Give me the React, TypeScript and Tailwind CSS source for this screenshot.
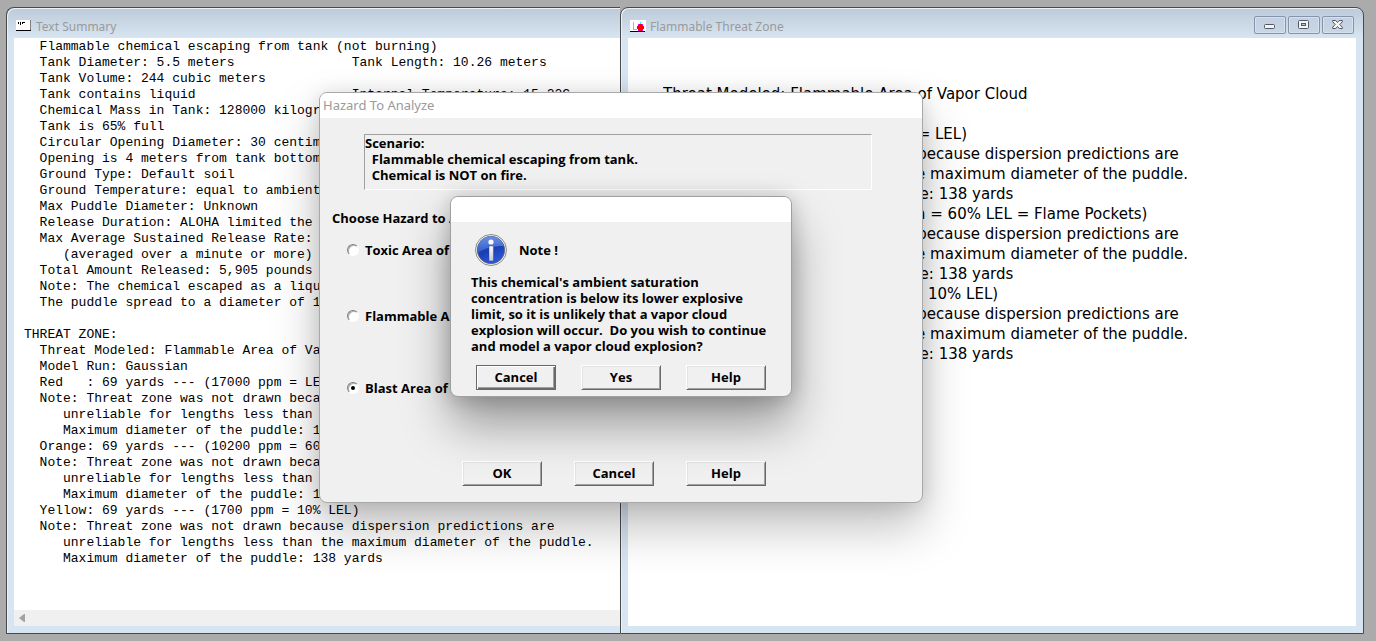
import { useState } from 'react'

const SUMMARY = `  Flammable chemical escaping from tank (not burning)
  Tank Diameter: 5.5 meters               Tank Length: 10.26 meters
  Tank Volume: 244 cubic meters
  Tank contains liquid                    Internal Temperature: 15.22C
  Chemical Mass in Tank: 128000 kilograms
  Tank is 65% full
  Circular Opening Diameter: 30 centimeters
  Opening is 4 meters from tank bottom
  Ground Type: Default soil
  Ground Temperature: equal to ambient
  Max Puddle Diameter: Unknown
  Release Duration: ALOHA limited the duration to 1 hour
  Max Average Sustained Release Rate: 107 pounds/min
     (averaged over a minute or more)
  Total Amount Released: 5,905 pounds
  Note: The chemical escaped as a liquid and formed an evaporating puddle.
  The puddle spread to a diameter of 138 yards.

THREAT ZONE:
  Threat Modeled: Flammable Area of Vapor Cloud
  Model Run: Gaussian
  Red   : 69 yards --- (17000 ppm = LEL)
  Note: Threat zone was not drawn because dispersion predictions are
     unreliable for lengths less than the maximum diameter of the puddle.
     Maximum diameter of the puddle: 138 yards
  Orange: 69 yards --- (10200 ppm = 60% LEL = Flame Pockets)
  Note: Threat zone was not drawn because dispersion predictions are
     unreliable for lengths less than the maximum diameter of the puddle.
     Maximum diameter of the puddle: 138 yards
  Yellow: 69 yards --- (1700 ppm = 10% LEL)
  Note: Threat zone was not drawn because dispersion predictions are
     unreliable for lengths less than the maximum diameter of the puddle.
     Maximum diameter of the puddle: 138 yards`

const THREAT = `Threat Modeled: Flammable Area of Vapor Cloud
Model Run: Gaussian
Red      : 69 yards --- (17000 ppm = LEL)
Note: Threat zone was not drawn because dispersion predictions are
unreliable for lengths less than the maximum diameter of the puddle.
   Maximum diameter of the puddle: 138 yards
Orange:    69 yards --- (10200 ppm = 60% LEL = Flame Pockets)
Note: Threat zone was not drawn because dispersion predictions are
unreliable for lengths less than the maximum diameter of the puddle.
   Maximum diameter of the puddle: 138 yards
Yellow:    69 yards --- (1700 ppm = 10% LEL)
Note: Threat zone was not drawn because dispersion predictions are
unreliable for lengths less than the maximum diameter of the puddle.
   Maximum diameter of the puddle: 138 yards`

const NOTE = `This chemical's ambient saturation
concentration is below its lower explosive
limit, so it is unlikely that a vapor cloud
explosion will occur.  Do you wish to continue
and model a vapor cloud explosion?`

const HAZARDS = [
  { id: 'toxic', label: 'Toxic Area of Vapor Cloud', gap: 'h-[66px]' },
  { id: 'flammable', label: 'Flammable Area of Vapor Cloud', gap: 'h-[72px]' },
  { id: 'blast', label: 'Blast Area of Vapor Cloud Explosion', gap: 'h-4' },
]

function TextIcon() {
  return (
    <svg width="16" height="12" viewBox="0 0 16 12" shapeRendering="crispEdges">
      <path fill="#fff" d="M0 0h14v10H0z" />
      <path fill="#808080" d="M14 0h1v11h-1z" />
      <path fill="#000" d="M0 10h15v1H0zM2 2h1v2H2zM4 2h1v3H4zM6 2h3v1H6zM6 3h1v1H6z" />
    </svg>
  )
}

function ZoneIcon() {
  return (
    <svg width="16" height="12" viewBox="0 0 16 12" shapeRendering="crispEdges">
      <path fill="#fff" d="M0 0h16v11H0z" />
      <path fill="#0ff" d="M3 2h1v8H3zM4 9h3v1H4zM10 2h1v2h-1z" />
      <path fill="#f0f" d="M8 4h5v7H8z" />
      <path fill="#f00" d="M9 4h3v1h1v1h1v3h-1v1h-1v1H9v-1H8V9H7V6h1V5h1z" />
      <path fill="#000" d="M0 11h15v1H0z" />
    </svg>
  )
}

function InfoIcon() {
  return (
    <svg width="32" height="32" viewBox="0 0 32 32">
      <defs>
        <linearGradient id="ball" x1="0" y1="0" x2="0.4" y2="1">
          <stop offset="0" stopColor="#1c47b4" />
          <stop offset="0.6" stopColor="#1a3fb4" />
          <stop offset="1" stopColor="#2a55d8" />
        </linearGradient>
        <linearGradient id="gloss" x1="0" y1="0" x2="0" y2="1">
          <stop offset="0" stopColor="#6a8fe6" />
          <stop offset="1" stopColor="#2f5cc8" />
        </linearGradient>
        <linearGradient id="stem" x1="0" y1="0" x2="0" y2="1">
          <stop offset="0" stopColor="#fff" />
          <stop offset="1" stopColor="#c9c9c9" />
        </linearGradient>
      </defs>
      <circle cx="16" cy="16" r="15.5" fill="#f4f4f4" stroke="#8a8a8a" />
      <circle cx="16" cy="16" r="13.7" fill="url(#ball)" stroke="#5b6275" strokeWidth="0.8" />
      <path fill="url(#gloss)" d="M3 19A13.2 13.2 0 0 1 28.6 12C21 12 10 13 3 19z" />
      <circle cx="16" cy="8" r="2.6" fill="#fff" />
      <rect x="14" y="12" width="4.4" height="15" rx="1" fill="url(#stem)" stroke="#27439b" strokeWidth="0.4" />
    </svg>
  )
}

function MinimizeIcon() {
  return (
    <svg width="12" height="10" viewBox="0 0 12 10">
      <rect x="0.5" y="4.5" width="10" height="4" rx="1" fill="#f4f4f0" stroke="#535666" />
    </svg>
  )
}

function MaximizeIcon() {
  return (
    <svg width="12" height="10" viewBox="0 0 12 10">
      <rect x="0.5" y="0.5" width="10" height="8" rx="1" fill="#f4f4f0" stroke="#535666" />
      <rect x="3.5" y="3.5" width="4" height="2" fill="#b9cbe4" stroke="#535666" />
    </svg>
  )
}

function CloseIcon() {
  return (
    <svg width="12" height="10" viewBox="0 0 12 10">
      <path
        fill="#f4f4f0"
        stroke="#535666"
        strokeLinejoin="round"
        d="M.7.5h3l1.8 2 1.8-2h3v1.3L7.8 4.5l2.5 2.7v1.3h-3l-1.8-2-1.8 2h-3V7.2l2.5-2.7L.7 1.8z"
      />
    </svg>
  )
}

const captionButton =
  'flex h-[18px] w-8 items-center justify-center rounded-xs border border-[#8593ad] bg-linear-to-b from-[#c3d0df] to-[#c9d6e6] shadow-[inset_0_0_0_1px_#d6e1ee]'

type ChildWindowProps = {
  title: string
  icon: React.ReactNode
  controls?: React.ReactNode
  className: string
  children: React.ReactNode
}

function ChildWindow({ title, icon, controls, className, children }: ChildWindowProps) {
  return (
    <section
      className={
        'flex min-w-0 flex-col rounded-t-lg border border-[#4a4a4a] bg-[#d7e4f2] bg-[linear-gradient(#bdcbd9,#d7e4f2_30px)] bg-no-repeat shadow-[inset_1px_1px_0_#eaf1f8] ' +
        className
      }
    >
      <header className="flex h-[30px] shrink-0 items-center pt-1 pr-[9px] pl-[9px]">
        <div className="flex flex-1 items-center gap-1 pt-0.5">
          {icon}
          <h2 className="pt-0.5 font-['Noto_Sans',sans-serif] text-xs leading-4 text-[#9a9a9a]">{title}</h2>
        </div>
        {controls}
      </header>
      {children}
    </section>
  )
}

function DialogButton({ children, isDefault = false }: { children: React.ReactNode; isDefault?: boolean }) {
  return (
    <button
      type="button"
      className={
        isDefault
          ? 'h-[25px] w-20 border border-[#696969] pb-0.5 shadow-[inset_1px_1px_0_#fff,inset_-1px_-1px_0_#696969,inset_-2px_-2px_0_#a0a0a0]'
          : 'h-[25px] w-20 border border-t-white border-r-[#696969] border-b-[#696969] border-l-white pb-0.5 shadow-[inset_1px_1px_0_#e3e3e3,inset_-1px_-1px_0_#a0a0a0]'
      }
    >
      {children}
    </button>
  )
}

export default function App() {
  const [hazard, setHazard] = useState('blast')

  return (
    <div className="relative grid min-h-screen grid-cols-[614fr_744fr] overflow-hidden bg-[#ababab] pt-[7px] pr-3 pb-[7px] pl-1.5 text-black">
      <ChildWindow title="Text Summary" icon={<TextIcon />} className="rounded-tr-none border-r-0">
        <div className="mb-[7px] ml-[7px] flex flex-1 flex-col bg-white">
          <pre className="flex-1 overflow-hidden pt-px pl-2.5 font-['Liberation_Mono',monospace] text-[13px] leading-4">
            {SUMMARY}
          </pre>
          <div className="flex h-4 items-center bg-[#f0f0f0] pl-1">
            <svg width="8" height="8" viewBox="0 0 8 8">
              <path fill="#a3a3a3" d="M1 4l5-4h1v8H6z" />
            </svg>
          </div>
        </div>
      </ChildWindow>

      <ChildWindow
        title="Flammable Threat Zone"
        icon={<ZoneIcon />}
        className=""
        controls={
          <div className="flex gap-0.5">
            <button type="button" aria-label="Minimize" className={captionButton}>
              <MinimizeIcon />
            </button>
            <button type="button" aria-label="Maximize" className={captionButton}>
              <MaximizeIcon />
            </button>
            <button type="button" aria-label="Close" className={captionButton}>
              <CloseIcon />
            </button>
          </div>
        }
      >
        <div className="mx-[7px] mb-[7px] flex-1 bg-white pt-[46px] pl-[35px]">
          <pre className="overflow-hidden font-['DejaVu_Sans',sans-serif] text-[15px] leading-5">{THREAT}</pre>
        </div>
      </ChildWindow>

      <div
        role="dialog"
        aria-labelledby="hazard-title"
        className="absolute top-[92px] left-[319px] w-[604px] overflow-hidden rounded-lg border border-[#a8a8a8] bg-[#f0f0f0] pb-4 font-['Open_Sans',sans-serif] text-[13px] leading-4 font-bold shadow-[0_24px_48px_rgba(0,0,0,0.25),0_2px_20px_rgba(0,0,0,0.12)]"
      >
        <h2
          id="hazard-title"
          className="h-[25px] bg-white pl-[3px] font-['Noto_Sans',sans-serif] leading-6 font-normal text-[#9a9a9a]"
        >
          Hazard To Analyze
        </h2>
        <div className="mt-4 mr-[50px] ml-11 h-14 border border-t-[#a0a0a0] border-r-white border-b-white border-l-[#a0a0a0] whitespace-pre">
          {'Scenario:\n  Flammable chemical escaping from tank.\n  Chemical is NOT on fire.'}
        </div>
        <fieldset className="mt-5 pl-3">
          <legend>Choose Hazard to Analyze:</legend>
          <div className="h-4" />
          {HAZARDS.map((h) => (
            <div key={h.id} className={h.gap}>
              <label className="flex h-4 w-max items-center gap-1.5 pl-[15px]">
                <input
                  type="radio"
                  name="hazard"
                  checked={hazard === h.id}
                  onChange={() => setHazard(h.id)}
                  className="flex size-3 appearance-none items-center justify-center rounded-full border border-t-[#808080] border-r-white border-b-white border-l-[#808080] bg-white shadow-[inset_1px_1px_0_#b0b0b0] checked:before:size-1 checked:before:rounded-full checked:before:bg-black checked:before:content-['']"
                />
                {h.label}
              </label>
            </div>
          ))}
        </fieldset>
        <div className="mt-[65px] ml-[142px] flex gap-8">
          <DialogButton>OK</DialogButton>
          <DialogButton>Cancel</DialogButton>
          <DialogButton>Help</DialogButton>
        </div>
      </div>

      <div
        role="alertdialog"
        aria-labelledby="note-title"
        className="absolute top-[196px] left-[450px] w-[342px] overflow-hidden rounded-lg border border-[#a0a0a0] bg-[#f0f0f0] pb-1.5 font-['Open_Sans',sans-serif] text-[13px] leading-4 font-bold shadow-[0_28px_48px_rgba(0,0,0,0.36),0_2px_20px_rgba(0,0,0,0.2)]"
      >
        <div className="h-[25px] bg-white" />
        <div className="flex items-center gap-3 pt-3 pl-6">
          <InfoIcon />
          <h2 id="note-title">Note !</h2>
        </div>
        <p className="mt-2 pl-5 whitespace-pre">{NOTE}</p>
        <div className="mt-[11px] flex gap-[25px] pl-[25px]">
          <DialogButton isDefault>Cancel</DialogButton>
          <DialogButton>Yes</DialogButton>
          <DialogButton>Help</DialogButton>
        </div>
      </div>
    </div>
  )
}
